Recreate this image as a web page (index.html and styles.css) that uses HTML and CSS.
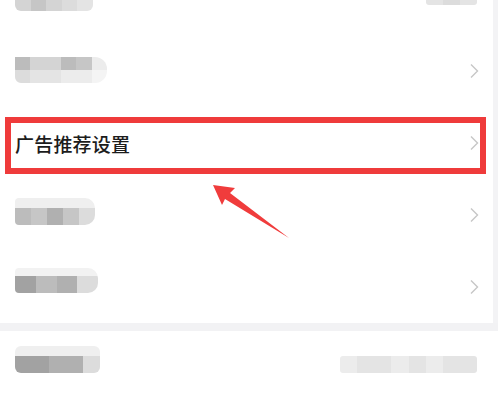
FILE: index.html
```html
<!DOCTYPE html>
<html lang="zh">
<head>
<meta charset="utf-8">
<link rel="stylesheet" href="styles.css">
</head>
<body>
<div class="page">
  <section class="card card-top">
    <div class="row row-first">
      <div class="mosaic m-w78">
        <div class="m-halo"></div>
        <div class="m-tiles"><span class="t5"></span><span class="t4"></span><span class="t5"></span><span class="t6"></span><span class="t7"></span></div>
      </div>
      <div class="value-block vb-top"><span class="t7"></span><span class="t6"></span><span class="t7"></span></div>
    </div>
    <div class="row">
      <div class="mosaic m-w92 m-r2">
        <div class="m-tiles m-tall"><span class="t3"></span><span class="t5"></span><span class="t5"></span><span class="t3"></span><span class="t4"></span><span class="t8"></span></div>
        <div class="m-tiles m-tall"><span class="t6"></span><span class="t7"></span><span class="t7"></span><span class="t8"></span><span class="t8"></span><span class="t9"></span></div>
      </div>
      <svg class="chev" viewBox="0 0 10 16"><polyline points="2,1.5 8.5,8 2,14.5"/></svg>
    </div>
    <div class="row row-target">
      <span class="label">广告推荐设置</span>
      <svg class="chev" viewBox="0 0 10 16"><polyline points="2,1.5 8.5,8 2,14.5"/></svg>
    </div>
    <div class="row">
      <div class="mosaic m-w80 m-r4">
        <div class="m-halo"></div>
        <div class="m-tiles m-dark"><span class="t3"></span><span class="t4"></span><span class="t2"></span><span class="t4"></span><span class="t6"></span></div>
      </div>
      <svg class="chev" viewBox="0 0 10 16"><polyline points="2,1.5 8.5,8 2,14.5"/></svg>
    </div>
    <div class="row">
      <div class="mosaic m-w83 m-r5">
        <div class="m-halo m-halo-s"></div>
        <div class="m-tiles m-dark"><span class="t1"></span><span class="t3"></span><span class="t2"></span><span class="t6"></span></div>
      </div>
      <svg class="chev" viewBox="0 0 10 16"><polyline points="2,1.5 8.5,8 2,14.5"/></svg>
    </div>
  </section>
  <div class="band"></div>
  <section class="card card-bottom">
    <div class="row row-last">
      <div class="mosaic m-w85">
        <div class="m-halo"></div>
        <div class="m-tiles m-dark"><span class="t1 wide"></span><span class="t2 wide"></span><span class="t6"></span></div>
      </div>
      <div class="value-block vb-bottom"><span class="t8"></span><span class="t7"></span><span class="t7"></span><span class="t8"></span><span class="t7"></span><span class="t8"></span><span class="t7"></span><span class="t7"></span></div>
    </div>
  </section>

  <div class="highlight"></div>
  <svg class="pointer" viewBox="0 0 498 403">
    <polygon points="213,185 235,188 230,193 289,238 225,199 222,205"/>
  </svg>
</div>
</body>
</html>
```
FILE: styles.css
```css
html, body {
  margin: 0;
  padding: 0;
  background: #ffffff;
}
body {
  width: 498px;
  height: 403px;
  overflow: hidden;
  font-family: "Noto Sans CJK SC", "Noto Sans", sans-serif;
}
.page {
  position: relative;
  width: 498px;
  height: 403px;
  background: #f3f3f5;
  display: flex;
  flex-direction: column;
}
.card {
  background: #ffffff;
}
.card-top {
  margin-top: -37px;
  margin-right: 5px;
}
.band {
  height: 14px;
  background: #f2f2f4;
}
.card-bottom {
  flex: 1;
}
.row {
  height: 72px;
  display: flex;
  align-items: center;
  justify-content: space-between;
  padding: 0 14px 0 15px;
}
.row-first {
  padding-right: 16px;
}
.row-last {
  align-items: flex-start;
  padding-top: 15px;
  padding-right: 21px;
  box-sizing: border-box;
}
.label {
  font-size: 19px;
  font-weight: 500;
  color: #1c1c1c;
  letter-spacing: 0.2px;
}
.chev {
  width: 10px;
  height: 16px;
  fill: none;
  stroke: #c6c6c6;
  stroke-width: 1.4;
}

/* blurred placeholders */
.mosaic {
  display: flex;
  flex-direction: column;
  border-radius: 6px;
  overflow: hidden;
}
.m-w78 { width: 78px; }
.m-w80 { width: 80px; }
.m-w83 { width: 83px; }
.m-w85 { width: 85px; }
.m-w92 { width: 92px; border-radius: 0 12px 12px 6px; }
.m-r2 { margin-top: -2px; }
.m-r4 { margin-top: -7px; border-radius: 4px 10px 10px 4px; }
.m-r5 { margin-top: -14px; border-radius: 4px 10px 10px 4px; }
.m-halo {
  height: 10px;
  background: #efefef;
}
.m-halo-s {
  height: 8px;
  background: #f2f2f2;
}
.m-tiles {
  display: flex;
  height: 14px;
}
.m-tall { height: 13px; }
.m-dark { height: 17px; }
.m-tiles span,
.value-block span {
  flex: 1;
}
.m-tiles .wide { flex: 2; }

.value-block {
  display: flex;
  border-radius: 3px;
  overflow: hidden;
}
.vb-top {
  width: 51px;
  height: 24px;
  margin-top: -12px;
}
.vb-bottom {
  width: 137px;
  height: 17px;
  margin-top: 10px;
}

.t1 { background: #a2a2a2; }
.t2 { background: #b0b0b0; }
.t3 { background: #bcbcbc; }
.t4 { background: #c6c6c6; }
.t5 { background: #d4d4d4; }
.t6 { background: #dcdcdc; }
.t7 { background: #e4e4e4; }
.t8 { background: #ececec; }
.t9 { background: #f4f4f4; }

/* annotation overlays */
.highlight {
  position: absolute;
  left: 5px;
  top: 117px;
  width: 481px;
  height: 57px;
  box-sizing: border-box;
  border: 6px solid #ef3b3b;
}
.pointer {
  position: absolute;
  left: 0;
  top: 0;
  width: 498px;
  height: 403px;
  fill: #f03c3c;
  pointer-events: none;
}
```
